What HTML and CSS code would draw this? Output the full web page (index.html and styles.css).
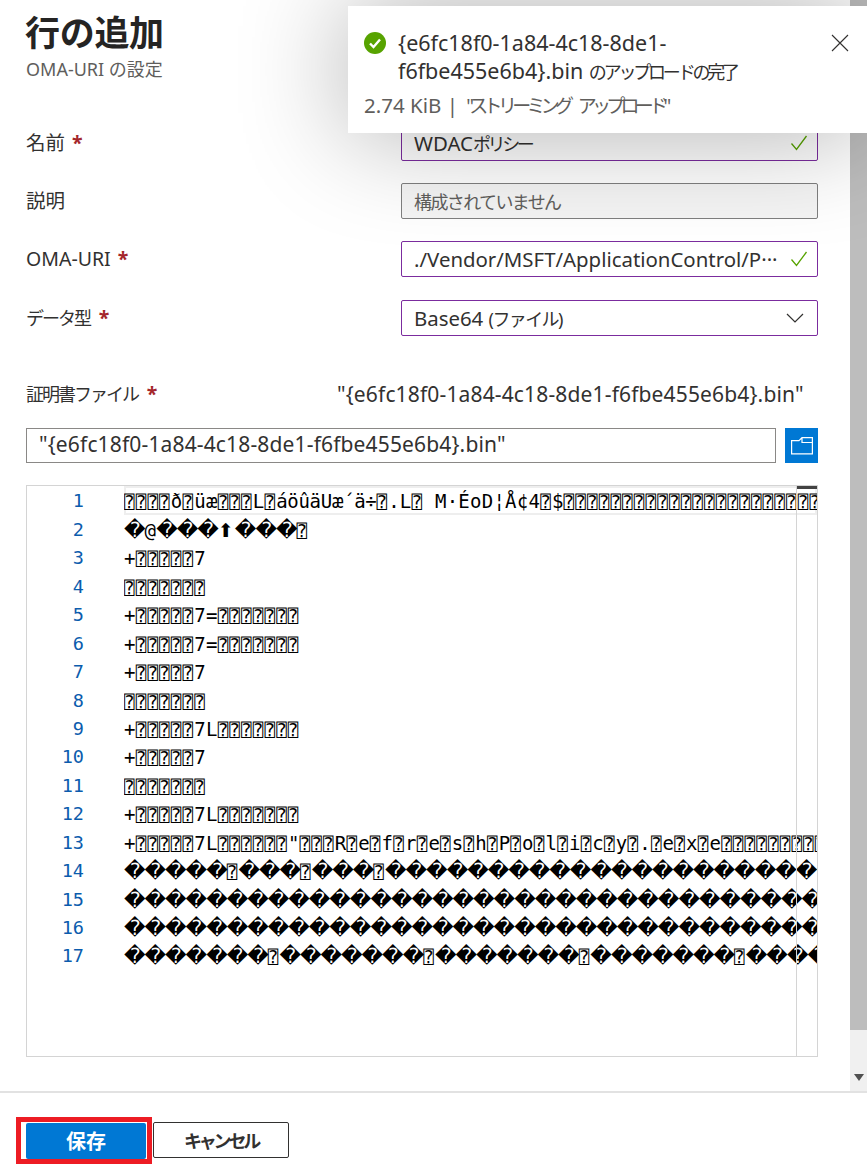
FILE: index.html
```html
<!DOCTYPE html>
<html lang="ja">
<head>
<meta charset="utf-8">
<title>行の追加</title>
<link rel="stylesheet" href="styles.css">
</head>
<body>
<div class="shell">
  <div class="body">
    <main class="form">
      <header class="head">
        <h1 class="title">行の追加</h1>
        <p class="subtitle">OMA-URI の設定</p>
      </header>
      <div class="fields">
        <div class="field">
          <label class="label">名前 <span class="req">*</span></label>
          <div class="input valid"><span class="value">WDAC<span class="kana narrow">ポリシー</span></span><svg class="tick" viewBox="0 0 18 18"><path d="M1.5 9.5 6.5 15.5 16.5 2"/></svg></div>
        </div>
        <div class="field">
          <label class="label">説明</label>
          <div class="input muted"><span class="value kana">構成されていません</span></div>
        </div>
        <div class="field">
          <label class="label">OMA-URI <span class="req">*</span></label>
          <div class="input valid"><span class="value">./Vendor/MSFT/ApplicationControl/P···</span><svg class="tick" viewBox="0 0 18 18"><path d="M1.5 9.5 6.5 15.5 16.5 2"/></svg></div>
        </div>
        <div class="field">
          <label class="label kana">データ型 <span class="req">*</span></label>
          <div class="input valid"><span class="value">Base64 <span class="kana">(ファイル)</span></span><svg class="chev" viewBox="0 0 18 10"><path d="M1 1 9 9 17 1"/></svg></div>
        </div>
      </div>
      <div class="file-head">
        <label class="label kana">証明書ファイル <span class="req">*</span></label>
        <span class="file-name">"{e6fc18f0-1a84-4c18-8de1-f6fbe455e6b4}.bin"</span>
      </div>
      <div class="file-row">
        <div class="file-input">"{e6fc18f0-1a84-4c18-8de1-f6fbe455e6b4}.bin"</div>
        <button class="browse" aria-label="参照"><svg viewBox="0 0 22 18"><path d="M.6 16.8V3.6H8L11 .6H21.4V16.8ZM11 .6V5.5H21.4"/></svg></button>
      </div>
      <section class="editor">
        <div class="editor-top"></div>
        <div class="gutter">
          <span>1</span><span>2</span><span>3</span><span>4</span><span>5</span><span>6</span><span>7</span><span>8</span><span>9</span><span>10</span><span>11</span><span>12</span><span>13</span><span>14</span><span>15</span><span>16</span><span>17</span>
        </div>
        <div class="code">
          <div class="line current"><span class="t">⍰⍰⍰⍰</span>ð<span class="t">⍰</span>üæ<span class="t">⍰⍰⍰</span>L<span class="t">⍰</span><span class="tight">áöûäUæ´ä÷</span><span class="t">⍰</span>.L<span class="t">⍰</span> M·ÉoD¦Å¢4<span class="t">⍰</span>$<span class="t">⍰⍰⍰⍰⍰⍰⍰⍰⍰⍰⍰⍰⍰⍰⍰⍰⍰⍰⍰⍰⍰⍰⍰⍰⍰⍰⍰⍰⍰⍰</span></div>
          <div class="line"><span class="dia">�</span>@<span class="dia">���</span><span class="up">⬆</span><span class="dia">���</span><span class="t">⍰</span></div>
          <div class="line">+<span class="t">⍰⍰⍰⍰⍰</span>7</div>
          <div class="line"><span class="t">⍰⍰⍰⍰⍰⍰⍰</span></div>
          <div class="line">+<span class="t">⍰⍰⍰⍰⍰</span>7=<span class="t">⍰⍰⍰⍰⍰⍰⍰</span></div>
          <div class="line">+<span class="t">⍰⍰⍰⍰⍰</span>7=<span class="t">⍰⍰⍰⍰⍰⍰⍰</span></div>
          <div class="line">+<span class="t">⍰⍰⍰⍰⍰</span>7</div>
          <div class="line"><span class="t">⍰⍰⍰⍰⍰⍰⍰</span></div>
          <div class="line">+<span class="t">⍰⍰⍰⍰⍰</span>7L<span class="t">⍰⍰⍰⍰⍰⍰⍰</span></div>
          <div class="line">+<span class="t">⍰⍰⍰⍰⍰</span>7</div>
          <div class="line"><span class="t">⍰⍰⍰⍰⍰⍰⍰</span></div>
          <div class="line">+<span class="t">⍰⍰⍰⍰⍰</span>7L<span class="t">⍰⍰⍰⍰⍰⍰⍰</span></div>
          <div class="line">+<span class="t">⍰⍰⍰⍰⍰</span>7L<span class="t">⍰⍰⍰⍰⍰⍰</span>"<span class="t">⍰⍰⍰</span>R<span class="t">⍰</span>e<span class="t">⍰</span>f<span class="t">⍰</span>r<span class="t">⍰</span>e<span class="t">⍰</span>s<span class="t">⍰</span>h<span class="t">⍰</span>P<span class="t">⍰</span>o<span class="t">⍰</span>l<span class="t">⍰</span>i<span class="t">⍰</span>c<span class="t">⍰</span>y<span class="t">⍰</span>.<span class="t">⍰</span>e<span class="t">⍰</span>x<span class="t">⍰</span>e<span class="t">⍰⍰⍰⍰⍰⍰⍰⍰⍰⍰</span></div>
          <div class="line"><span class="dia">�����</span><span class="t">⍰</span><span class="dia">���</span><span class="t">⍰</span><span class="dia">���</span><span class="t">⍰</span><span class="dia">�����������������������</span></div>
          <div class="line"><span class="dia">����������������������������������</span></div>
          <div class="line"><span class="dia">����������������������������������</span></div>
          <div class="line"><span class="dia">�������</span><span class="t">⍰</span><span class="dia">�������</span><span class="t">⍰</span><span class="dia">�������</span><span class="t">⍰</span><span class="dia">�������</span><span class="t">⍰</span><span class="dia">�����</span></div>
        </div>
        <div class="minimap"></div>
      </section>
    </main>
    <div class="scrollbar">
      <div class="thumb"></div>
      <div class="arrow"></div>
    </div>
  </div>
  <footer class="footer">
    <span class="save-mark"><button class="btn primary">保存</button></span>
    <button class="btn secondary kana">キャンセル</button>
  </footer>
  <aside class="toast">
    <svg class="ok" viewBox="0 0 22 22"><circle cx="11" cy="11" r="11"/><path d="M6 11.5 9.5 15 16 7.5"/></svg>
    <div class="toast-text">
      <p class="toast-title">{e6fc18f0-1a84-4c18-8de1-f6fbe455e6b4}.bin <span class="kana">のアップロードの完了</span></p>
      <p class="toast-meta">2.74 KiB | <span class="kana">"ストリーミング アップロード"</span></p>
    </div>
    <svg class="close" viewBox="0 0 18 18"><path d="M1 1 17 17M17 1 1 17"/></svg>
  </aside>
</div>
</body>
</html>
```
FILE: styles.css
```css
* { box-sizing: border-box; }
html, body { margin: 0; height: 100%; background: #fff; overflow: hidden; }
body { font-family: "Noto Sans", "Noto Sans CJK JP", sans-serif; color: #323130; }
p, h1 { margin: 0; }
.kana { font-size: 18px; letter-spacing: -1.8px; }

.shell { position: relative; height: 1168px; display: flex; flex-direction: column; }
.body { flex: 1; display: flex; min-height: 0; border-bottom: 2px solid #e2e2e2; }
.form { flex: 1; min-width: 0; padding: 11px 32px 0 26px; }

.head { height: 113.5px; }
.title { font-size: 35px; line-height: 44px; font-weight: 700; color: #252423; letter-spacing: -.3px; margin-left: -1px; }
.subtitle { font-size: 18px; line-height: 24px; color: #605e5c; margin-top: 2px; letter-spacing: 0; }

.fields { display: flex; flex-direction: column; gap: 22.4px; }
.field { display: grid; grid-template-columns: 375px 417px; align-items: center; height: 36px; }
.label { font-size: 19.5px; line-height: 26px; }
.label.kana { font-size: 18px; letter-spacing: -2px; }
.req { color: #a4262c; font-weight: 700; letter-spacing: 0; margin-left: 2px; font-size: 19.5px; }
.label.kana .req { margin-left: 6px; }

.input { height: 36px; display: flex; align-items: center; justify-content: space-between; padding: 0 9px 0 12px; border: 1px solid #7f7f7f; border-radius: 2px; font-size: 20.4px; white-space: nowrap; }
.input.valid { border-color: #7b2c9e; }
.input.muted { background: #f5f5f5; color: #605e5c; }
.value { overflow: hidden; padding-right: 5px; }
.input .kana { letter-spacing: -1.6px; }
.input .kana.narrow { letter-spacing: -3.4px; }
.tick { width: 18px; height: 18px; flex: none; fill: none; stroke: #57a300; stroke-width: 1.3; }
.chev { width: 18px; height: 10px; margin-right: 4px; flex: none; fill: none; stroke: #323130; stroke-width: 1.2; }

.file-head { display: grid; grid-template-columns: 311px 1fr; margin-top: 44.8px; height: 26px; align-items: center; }
.file-name { font-size: 21px; letter-spacing: .15px; white-space: nowrap; }
.file-row { display: flex; gap: 9px; margin-top: 22px; height: 35px; }
.file-input { flex: 1; border: 1px solid #8a8886; padding: 0 12px; font-size: 21px; letter-spacing: .15px; line-height: 31px; white-space: nowrap; overflow: hidden; }
.browse { width: 33px; padding: 0; border: 0; background: #0078d4; display: flex; align-items: center; justify-content: center; }
.browse svg { width: 22px; height: 18px; fill: none; stroke: #fff; stroke-width: 1.2; }

.editor { position: relative; margin-top: 22px; height: 572px; border: 1px solid #d4d4d4; display: flex; overflow: hidden; }
.editor-top { position: absolute; right: 0; top: 0; width: 20px; height: 3px; background: #424242; }
.gutter { width: 57px; flex: none; display: flex; flex-direction: column; align-items: flex-end; font-family: "DejaVu Sans Mono", monospace; font-size: 18.5px; color: #0b5cad; }
.gutter span { height: 28.44px; line-height: 30px; }
.code { flex: 1; min-width: 0; margin-left: 40px; overflow: hidden; font-family: "DejaVu Sans Mono", monospace; font-size: 19px; color: #000; }
.line { height: 28.44px; line-height: 30px; white-space: pre; overflow: hidden; letter-spacing: .25px; }
.line.current { box-shadow: inset 0 0 0 2px #eee; }
.t { font-size: 17.5px; letter-spacing: 1.17px; }
.tight { letter-spacing: -.3px; }
.dia { font-family: "DejaVu Sans", sans-serif; font-size: 21px; line-height: 20px; letter-spacing: -1px; }
.up { display: inline-block; width: 17px; font-family: "DejaVu Sans", sans-serif; font-size: 19px; line-height: 20px; }
.minimap { position: absolute; right: 20px; top: 0; bottom: 0; border-left: 1px solid #d4d4d4; }

.scrollbar { position: relative; width: 17px; flex: none; background: #f0f0f0; }
.thumb { height: 1030px; background: #bdbdbd; }
.arrow { position: absolute; left: 4px; bottom: 10px; border: 5px solid transparent; border-top: 7px solid #505050; border-bottom: 0; }

.footer { height: 75px; flex: none; display: flex; align-items: flex-start; padding: 24px 0 0 16px; }
.save-mark { border: 5px solid #ed1c24; padding: 0 1px 0 5px; height: 47px; display: flex; align-items: center; background: #fff; }
.btn { height: 36px; border-radius: 2px; font: inherit; font-weight: 700; padding: 0; }
.primary { width: 120px; background: #0078d4; border: 0; color: #fff; font-size: 20px; }
.secondary { width: 136px; margin: 5px 0 0 1px; background: #fff; border: 1px solid #323130; color: #323130; }
.btn.kana { font-size: 18px; letter-spacing: -3.2px; }

.toast { position: absolute; left: 348px; top: 6px; width: 519px; height: 127px; background: #fff; display: flex; padding: 23px 0 0 16px; box-shadow: 0 0 110px rgba(0,0,0,.32); }
.ok { width: 22px; height: 22px; flex: none; margin-top: 3px; }
.ok circle { fill: #57a300; }
.ok path { fill: none; stroke: #fff; stroke-width: 2.4; }
.toast-text { flex: 1; min-width: 0; margin-left: 12px; }
.toast-title { font-size: 21.5px; line-height: 28px; width: 345px; }
.toast-title .kana { letter-spacing: -3.2px; }
.toast-meta { font-size: 20.5px; line-height: 26px; color: #605e5c; margin: 6px 0 0 -34px; }
.toast-meta .kana { font-size: 19px; letter-spacing: -4.7px; word-spacing: 8px; margin-left: 3px; }
.close { position: absolute; right: 18px; top: 28px; width: 18px; height: 18px; fill: none; stroke: #323130; stroke-width: 1.1; }
```
